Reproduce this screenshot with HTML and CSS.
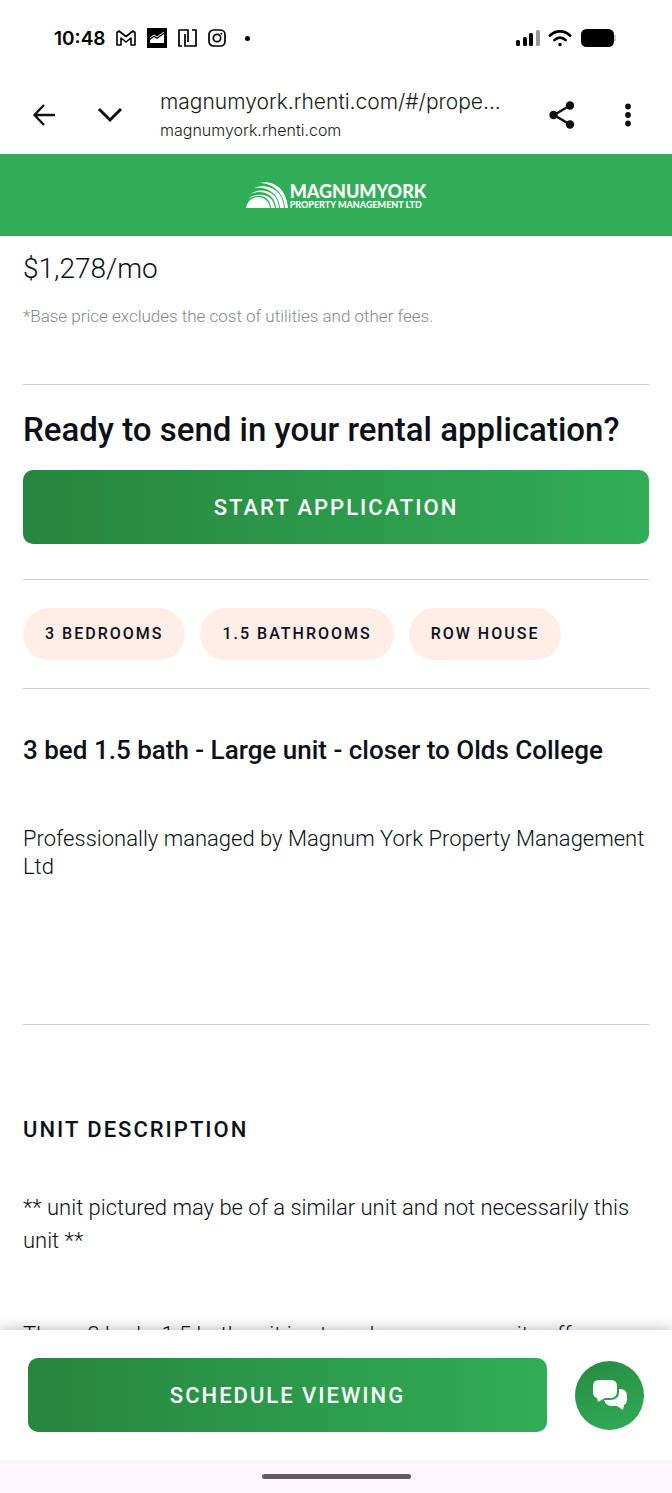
FILE: index.html
```
<!DOCTYPE html>
<html lang="en">
<head>
    <meta charset="UTF-8">
    <meta name="viewport" content="width=device-width, initial-scale=1.0">
    <title>Magnum York Property Management</title>
    <link rel="stylesheet" href="styles.css">
</head>
<body>
    <div class="status-bar">
        <span class="clock">10:48</span>
        <!-- mail -->
        <svg width="20" height="16" viewBox="0 0 20 16" fill="none" stroke="#000" stroke-width="1.6" stroke-linejoin="round"><path d="M1 2.5V15h4V8l5 4 5-4v7h4V2.5L17 1l-7 5.5L3 1z"/></svg>
        <!-- stocks -->
        <svg width="20" height="20" viewBox="0 0 20 20"><path d="M0 0h20v20H0z"/><path d="M3 15v-3l4-3 3 2 7-5v9z" fill="#fff"/><path d="M3 10l4-3 3 2 7-5" fill="none" stroke="#fff" stroke-width="1"/></svg>
        <!-- nfc -->
        <svg width="19" height="18" viewBox="0 0 19 18" fill="none" stroke="#000" stroke-width="1.7"><path d="M4 17H1V1h9v12M6 4v0M7 5v12h11V1h-4"/></svg>
        <!-- camera -->
        <svg width="18" height="18" viewBox="0 0 18 18" fill="none" stroke="#000" stroke-width="1.7"><rect x="1" y="1" width="16" height="16" rx="4.5"/><circle cx="9" cy="9" r="3.7"/><circle cx="13.4" cy="4.7" r=".7" fill="#000" stroke-width=".6"/></svg>
        <span class="more-dot"></span>
        <svg class="signal" width="24" height="18" viewBox="0 0 24 18"><rect y="11" width="4" height="6" rx="1.5"/><rect x="7" y="8" width="4" height="9" rx="1.5"/><rect x="13" y="4" width="4" height="13" rx="1.5"/><rect x="20" y="1" width="4" height="16" rx="1.5" fill="#999"/></svg>
        <svg width="24" height="18" viewBox="0 0 24 18" fill="none" stroke="#000" stroke-width="2.8" stroke-linecap="round"><path d="M2 6.5c6-5.5 14-5.5 20 0M6.5 11c3.5-3 7.5-3 11 0"/><circle cx="12" cy="15.5" r="1" fill="#000" stroke-width="1.6"/></svg>
        <svg width="36" height="20" viewBox="0 0 36 20"><rect x="1" y="1" width="33" height="18" rx="5.5"/><path d="M35 7v6" stroke="#bbb" stroke-width="1.5"/></svg>
    </div>

    <div class="toolbar">
        <button type="button" class="icon-btn" aria-label="Back">
            <svg width="24" height="24" viewBox="0 0 24 24" fill="none" stroke="#111" stroke-width="2.3"><path d="M23 12H3M12 2L2.5 12 12 22"/></svg>
        </button>
        <button type="button" class="icon-btn" aria-label="Collapse">
            <svg width="26" height="24" viewBox="0 0 26 24" fill="none" stroke="#111" stroke-width="3"><path d="M2 6l11 11L24 6"/></svg>
        </button>
        <div class="address">
            <span class="url">magnumyork.rhenti.com/#/prope...</span>
            <span class="host">magnumyork.rhenti.com</span>
        </div>
        <button type="button" class="icon-btn" aria-label="Share">
            <svg width="28" height="28" viewBox="0 0 28 28"><path d="M22 4.5L6 14l16 9.5" fill="none" stroke="#111" stroke-width="2.4"/><g fill="#111"><circle cx="22" cy="4.5" r="4.2"/><circle cx="5.5" cy="14" r="4.2"/><circle cx="22" cy="23.5" r="4.2"/></g></svg>
        </button>
        <button type="button" class="icon-btn" aria-label="More options">
            <svg width="8" height="24" viewBox="0 0 8 24" fill="#111"><circle cx="4" cy="3.5" r="2.9"/><circle cx="4" cy="12" r="2.9"/><circle cx="4" cy="20.5" r="2.9"/></svg>
        </button>
    </div>

    <header>
        <svg width="42" height="26" viewBox="0 0 42 26" fill="#fff">
            <path d="M0 26C1 19 6 15 12 15s11 4 12 11z"/>
            <path d="M2 17c6-6 25-8 27 9h-4C24 13 12 11 2 17z"/>
            <path d="M4 12c10-7 28-4 29 14h-3C29 12 16 7 4 12z"/>
            <path d="M8 6c12-5 29 1 30 20h-4C33 11 21 4 8 6z"/>
            <path d="M13 1c14-4 28 6 29 25h-3C38 11 27 1 13 1z"/>
        </svg>
        <div class="brand">
            <span class="brand-name">MAGNUMYORK</span>
            <span class="brand-tag">PROPERTY MANAGEMENT LTD</span>
        </div>
    </header>

    <main>
        <section class="pricing">
            <p class="price">$1,278/mo</p>
            <p class="note">*Base price excludes the cost of utilities and other fees.</p>
        </section>

        <section class="apply">
            <h1>Ready to send in your rental application?</h1>
            <button type="button" class="btn">START APPLICATION</button>
        </section>

        <ul class="tags">
            <li>3 BEDROOMS</li>
            <li>1.5 BATHROOMS</li>
            <li>ROW HOUSE</li>
        </ul>

        <section class="summary">
            <h2>3 bed 1.5 bath - Large unit - closer to Olds College</h2>
            <p>Professionally managed by Magnum York Property Management Ltd</p>
        </section>

        <section class="description">
            <h3>UNIT DESCRIPTION</h3>
            <p>** unit pictured may be of a similar unit and not necessarily this unit **</p>
            <p>These 3 beds, 1.5 bath unit is at our larger community offers</p>
        </section>
    </main>

    <footer>
        <button type="button" class="btn">SCHEDULE VIEWING</button>
        <button type="button" class="chat-btn" aria-label="Chat">
            <svg width="36" height="32" viewBox="0 0 36 32" fill="#fff">
                <path d="M27 10h1q7 0 7 7v3q0 5-3 6l-1 5-6-4h-5q-6 0-8-6h6q9 0 9-8z"/>
                <path d="M7 1h12q6 0 6 6v5q0 7-6 7h-6l-7 4-1-4q-4-1-4-6V7q0-6 6-6z"/>
            </svg>
        </button>
    </footer>
    <div class="nav-bar"><span class="handle"></span></div>
</body>
</html>
```
FILE: styles.css
```
* {
    box-sizing: border-box;
}

body {
    margin: 0;
    height: 100vh;
    display: flex;
    flex-direction: column;
    font-family: Roboto, sans-serif;
    color: #0c1018;
    background-color: #fff;
}

h1, h2, h3, p, ul {
    margin: 0;
    padding: 0;
}

button {
    border: none;
    padding: 0;
    font-family: inherit;
    cursor: pointer;
}

.status-bar {
    display: flex;
    align-items: center;
    gap: 11px;
    height: 76px;
    padding: 0 56px 0 54px;
    flex-shrink: 0;
}

.clock {
    font-family: Inter, sans-serif;
    font-size: 19px;
    font-weight: 600;
    color: #000;
}

.more-dot {
    width: 5px;
    height: 5px;
    margin-left: 8px;
    border-radius: 50%;
    background-color: #000;
}

.signal {
    margin-left: auto;
}

.signal ~ svg {
    margin-left: -3px;
}

.toolbar {
    display: flex;
    align-items: center;
    gap: 26px;
    height: 78px;
    padding: 0 24px;
    flex-shrink: 0;
}

.icon-btn {
    display: flex;
    justify-content: center;
    align-items: center;
    width: 40px;
    height: 40px;
    background: none;
}

.address {
    flex: 1;
    min-width: 0;
    margin-left: 4px;
    padding-bottom: 2px;
    display: flex;
    flex-direction: column;
    gap: 4px;
    color: #1a1a1a;
    font-family: Inter, sans-serif;
    white-space: nowrap;
}

.url {
    font-size: 21px;
    line-height: 28px;
    font-weight: 300;
}

.host {
    font-size: 16px;
    line-height: 20px;
    font-weight: 300;
}

header {
    display: flex;
    justify-content: center;
    align-items: center;
    gap: 2px;
    height: 82px;
    flex-shrink: 0;
    background-color: #31ad57;
    color: #fff;
}

.brand {
    display: flex;
    flex-direction: column;
    font-family: Lato, sans-serif;
    font-weight: 900;
}

.brand-name {
    font-size: 18px;
    line-height: 18px;
}

.brand-tag {
    font-size: 9px;
    line-height: 9px;
}

main {
    flex: 1;
    min-height: 0;
    overflow-y: auto;
    scrollbar-width: none;
    padding: 0 23px;
}

.pricing, .apply, .tags, .summary {
    border-bottom: solid 1px #cfcfcf;
}

.pricing {
    padding: 17px 0 56px;
}

.price {
    font-size: 28px;
    line-height: 32px;
    font-weight: 300;
}

.note {
    margin-top: 19px;
    font-size: 17px;
    line-height: 24px;
    font-weight: 300;
    color: #85888d;
}

.apply {
    padding: 25px 0 35px;
}

h1 {
    font-size: 33px;
    line-height: 40px;
    font-weight: 500;
}

.btn {
    height: 74px;
    border-radius: 10px;
    background-image: linear-gradient(90deg, #27853f, #31ad57);
    color: #fff;
    font-size: 22px;
    font-weight: 500;
    letter-spacing: 2px;
}

.apply .btn {
    display: block;
    width: 100%;
    margin-top: 20px;
}

.tags {
    display: flex;
    gap: 15px;
    padding: 28px 0;
    list-style: none;
}

.tags li {
    padding: 0 22px;
    border-radius: 26px;
    background-color: #ffede7;
    font-size: 16px;
    font-weight: 500;
    line-height: 52px;
    letter-spacing: 2px;
}

.summary {
    padding: 45px 0 143px;
}

h2 {
    font-size: 26px;
    line-height: 32px;
    font-weight: 500;
}

.summary p {
    margin-top: 59px;
    font-size: 22px;
    line-height: 28px;
    font-weight: 300;
}

.description {
    padding-top: 89px;
}

h3 {
    font-size: 22px;
    line-height: 32px;
    font-weight: 500;
    letter-spacing: 2px;
}

.description p {
    font-size: 22px;
    line-height: 33px;
    font-weight: 300;
}

.description h3 + p {
    margin-top: 45px;
}

.description p + p {
    margin-top: 61px;
}

footer {
    position: relative;
    display: flex;
    align-items: center;
    gap: 28px;
    padding: 28px;
    background-color: #fff;
    box-shadow: 0 0 14px rgba(0, 0, 0, 0.3);
}

footer .btn {
    flex: 1;
}

.chat-btn {
    display: flex;
    justify-content: center;
    align-items: center;
    width: 69px;
    height: 69px;
    border-radius: 50%;
    background-image: linear-gradient(160deg, #278a43, #31ad57);
}

.nav-bar {
    position: relative;
    display: flex;
    justify-content: center;
    align-items: center;
    height: 33px;
    flex-shrink: 0;
    background-color: #fdf7fd;
}

.handle {
    width: 149px;
    height: 5px;
    border-radius: 3px;
    background-color: #5f5b60;
}
```
